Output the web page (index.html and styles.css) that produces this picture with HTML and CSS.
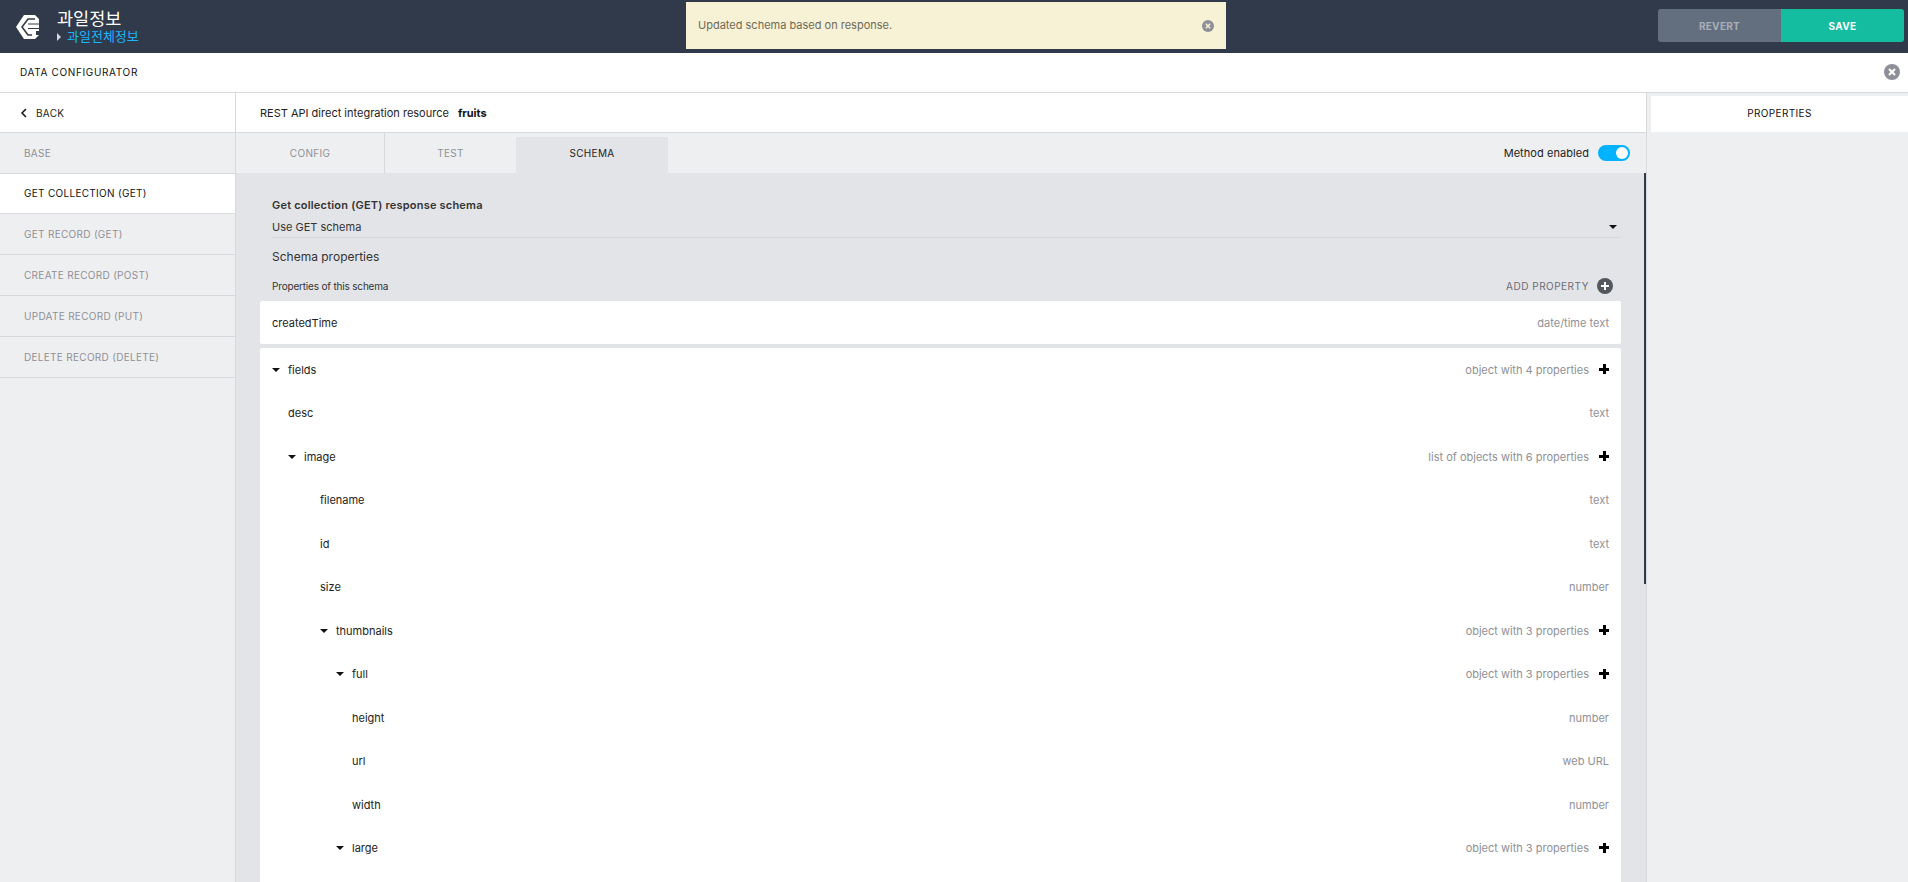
FILE: index.html
```html
<!DOCTYPE html>
<html lang="ko">
<head>
    <meta charset="UTF-8">
    <title>Data Configurator</title>
    <link rel="stylesheet" href="styles.css">
</head>
<body>
    <header class="topbar">
        <div class="brand">
            <svg class="logo" width="24" height="24" viewBox="0 0 24 24">
                <path fill="#fff" d="M8 0H19L23 4V20L19 24H8L0 12Z"/>
                <path fill="none" stroke="#303a4a" stroke-width="1.600" d="M19 4H12L6 12l6 8h4"/>
                <path fill="none" stroke="#303a4a" stroke-width="1" d="M12 9H23M12 13.500H23"/>
                <path fill="#303a4a" d="M20 16h3v4h-3z"/>
            </svg>
            <div class="brand-text">
                <div class="app-name">과일정보</div>
                <div class="page-name"><span class="page-arrow"></span>과일전체정보</div>
            </div>
        </div>
        <div class="toast">
            <span>Updated schema based on response.</span>
            <svg width="12" height="12" viewBox="0 0 12 12">
                <circle cx="6" cy="6" r="6" fill="#8e8f99"/>
                <path d="M3.800 3.800l4.400 4.400M8.200 3.800l-4.400 4.400" stroke="#f7f1d6" stroke-width="1.500"/>
            </svg>
        </div>
        <div class="top-actions">
            <button class="btn-revert">REVERT</button>
            <button class="btn-save">SAVE</button>
        </div>
    </header>

    <div class="toolbar">
        <span>DATA CONFIGURATOR</span>
        <svg width="16" height="16" viewBox="0 0 16 16">
            <circle cx="8" cy="8" r="8" fill="#8e8f99"/>
            <path d="M5 5l6 6M11 5l-6 6" stroke="#fff" stroke-width="2"/>
        </svg>
    </div>

    <div class="workspace">
        <aside class="sidebar">
            <div class="back">
                <svg width="8" height="10" viewBox="0 0 8 10"><path d="M6 1L2 5l4 4" fill="none" stroke="#111" stroke-width="1.500"/></svg>
                BACK
            </div>
            <div class="side-item">BASE</div>
            <div class="side-item active">GET COLLECTION (GET)</div>
            <div class="side-item">GET RECORD (GET)</div>
            <div class="side-item">CREATE RECORD (POST)</div>
            <div class="side-item">UPDATE RECORD (PUT)</div>
            <div class="side-item">DELETE RECORD (DELETE)</div>
        </aside>

        <main class="main">
            <div class="title-row">REST API direct integration resource <b>fruits</b></div>
            <div class="tabs">
                <div class="tab tab-config">CONFIG</div>
                <div class="tab tab-test">TEST</div>
                <div class="tab tab-schema">SCHEMA</div>
                <div class="method">
                    Method enabled
                    <span class="switch"><span class="knob"></span></span>
                </div>
            </div>
            <div class="content">
                <div class="scroll-thumb"></div>
                <div class="form-head">
                    <div class="schema-title">Get collection (GET) response schema</div>
                    <div class="select-row">Use GET schema<span class="caret"></span></div>
                    <div class="props-title">Schema properties</div>
                    <div class="props-bar">
                        <span class="props-label">Properties of this schema</span>
                        <span class="add-prop">
                            ADD PROPERTY
                            <svg width="16" height="16" viewBox="0 0 16 16">
                                <circle cx="8" cy="8" r="8" fill="#54575e"/>
                                <path d="M8 4v8M4 8h8" stroke="#fff" stroke-width="2"/>
                            </svg>
                        </span>
                    </div>
                </div>
                <div class="card single">
                    <div class="row"><span class="name">createdTime</span><span class="type">date/time text</span></div>
                </div>
                <div class="card tree">
                    <div class="row"><span class="name"><i class="caret"></i>fields</span><span class="type">object with 4 properties<i class="plus"></i></span></div>
                    <div class="row lvl1"><span class="name">desc</span><span class="type">text</span></div>
                    <div class="row lvl1"><span class="name"><i class="caret"></i>image</span><span class="type">list of objects with 6 properties<i class="plus"></i></span></div>
                    <div class="row lvl2"><span class="name">filename</span><span class="type">text</span></div>
                    <div class="row lvl2"><span class="name">id</span><span class="type">text</span></div>
                    <div class="row lvl2"><span class="name">size</span><span class="type">number</span></div>
                    <div class="row lvl2"><span class="name"><i class="caret"></i>thumbnails</span><span class="type">object with 3 properties<i class="plus"></i></span></div>
                    <div class="row lvl3"><span class="name"><i class="caret"></i>full</span><span class="type">object with 3 properties<i class="plus"></i></span></div>
                    <div class="row lvl4"><span class="name">height</span><span class="type">number</span></div>
                    <div class="row lvl4"><span class="name">url</span><span class="type">web URL</span></div>
                    <div class="row lvl4"><span class="name">width</span><span class="type">number</span></div>
                    <div class="row lvl3"><span class="name"><i class="caret"></i>large</span><span class="type">object with 3 properties<i class="plus"></i></span></div>
                </div>
            </div>
        </main>

        <aside class="right-panel">
            <div class="right-title">PROPERTIES</div>
        </aside>
    </div>
</body>
</html>
```
FILE: styles.css
```css
* {
    box-sizing: border-box;
}

html, body {
    height: 100%;
}

body {
    margin: 0;
    overflow: hidden;
    display: flex;
    flex-direction: column;
    font-family: Inter, "Noto Sans CJK KR", sans-serif;
    font-size: 11px;
    color: #222;
    background: #eeeff1;
}

.topbar {
    height: 53px;
    flex: none;
    display: flex;
    align-items: flex-start;
    background: #303a4a;
    padding-right: 4px;
}

.brand {
    width: 686px;
    height: 53px;
    flex: none;
    display: flex;
    align-items: center;
    padding-left: 16px;
}

.logo {
    margin-right: 17px;
}

.brand-text {
    padding-bottom: 1px;
    font-family: "Noto Sans CJK KR", sans-serif;
}

.app-name {
    color: #fff;
    font-size: 17.5px;
    line-height: 20px;
}

.page-name {
    color: #19b5fe;
    font-size: 13px;
    line-height: 16px;
}

.page-arrow {
    display: inline-block;
    margin-right: 6px;
    border-left: 4px solid #d5d8dc;
    border-top: 4px solid transparent;
    border-bottom: 4px solid transparent;
}

.toast {
    width: 540px;
    height: 47px;
    margin-top: 2px;
    display: flex;
    justify-content: space-between;
    align-items: center;
    padding: 0 12px;
    background: #f7f1d6;
    color: #6e6b57;
}

.toast span {
    margin-bottom: 2px;
}

.top-actions {
    display: flex;
    margin-top: 9px;
    margin-left: auto;
}

.top-actions button {
    width: 123px;
    height: 33px;
    border: 0;
    font-family: inherit;
    font-size: 10px;
    font-weight: 700;
    letter-spacing: 0.3px;
}

.btn-revert {
    background: #636e7f;
    color: #a9aeb6;
    border-radius: 3px 0 0 3px;
}

.btn-save {
    background: #14bca0;
    color: #fff;
    border-radius: 0 3px 3px 0;
}

.toolbar {
    height: 40px;
    flex: none;
    display: flex;
    justify-content: space-between;
    align-items: center;
    padding: 0 8px 1px 20px;
    background: #fff;
    border-bottom: 1px solid #d8d9dc;
    font-size: 10px;
    letter-spacing: 0.65px;
    color: #111;
}

.workspace {
    flex: 1;
    display: flex;
    min-height: 0;
}

.sidebar {
    width: 236px;
    flex: none;
    border-right: 1px solid #d8d9dc;
}

.back {
    height: 40px;
    display: flex;
    align-items: center;
    gap: 8px;
    padding-left: 20px;
    background: #fff;
    border-bottom: 1px solid #d8d9dc;
    font-size: 10px;
    letter-spacing: 0.3px;
    color: #222;
}

.side-item {
    height: 41px;
    display: flex;
    align-items: center;
    padding: 0 0 1px 24px;
    border-bottom: 1px solid #d8d9dc;
    font-size: 10px;
    letter-spacing: 0.3px;
    color: #8f9096;
}

.side-item.active {
    height: 40px;
    background: #fff;
    color: #111;
}

.main {
    width: 1411px;
    flex: none;
    display: flex;
    flex-direction: column;
    border-right: 1px solid #d8d9dc;
}

.title-row {
    height: 40px;
    flex: none;
    display: flex;
    align-items: center;
    gap: 9px;
    padding-left: 24px;
    background: #fff;
    border-bottom: 1px solid #d8d9dc;
    color: #222;
}

.title-row b {
    color: #111;
}

.tabs {
    height: 40px;
    flex: none;
    display: flex;
    align-items: flex-end;
}

.tab {
    height: 40px;
    display: flex;
    align-items: center;
    justify-content: center;
    font-size: 10px;
    letter-spacing: 0.3px;
    color: #8f9096;
}

.tab-config {
    width: 149px;
    border-right: 1px solid #d8d9dc;
}

.tab-test {
    width: 131px;
}

.tab-schema {
    width: 152px;
    height: 36px;
    padding-bottom: 4px;
    background: #e3e4e8;
    color: #222;
}

.method {
    margin-left: auto;
    height: 40px;
    display: flex;
    align-items: center;
    gap: 9px;
    padding-right: 16px;
    letter-spacing: 0.06px;
    color: #222;
}

.switch {
    width: 32px;
    height: 16px;
    display: flex;
    justify-content: flex-end;
    align-items: center;
    padding-right: 2px;
    border-radius: 8px;
    background: #00b2ff;
}

.knob {
    width: 12px;
    height: 12px;
    border-radius: 50%;
    background: #fff;
}

.content {
    flex: 1;
    position: relative;
    overflow: hidden;
    padding: 0 25px 0 24px;
    background: #e3e4e8;
}

.scroll-thumb {
    position: absolute;
    top: 0;
    right: 0;
    width: 2px;
    height: 411px;
    background: #303a4a;
}

.form-head {
    padding: 25px 0 0 12px;
}

.schema-title {
    font-weight: 600;
    letter-spacing: 0.2px;
    color: #333;
    line-height: 14px;
}

.select-row {
    display: flex;
    justify-content: space-between;
    align-items: center;
    height: 22px;
    padding: 1px 4px 0 0;
    margin-top: 4px;
    border-bottom: 1px solid #d8d9dc;
    color: #333;
}

.props-title {
    font-size: 12px;
    line-height: 16px;
    margin-top: 11px;
    color: #333;
}

.props-bar {
    display: flex;
    justify-content: space-between;
    align-items: center;
    height: 20px;
    margin-top: 11px;
    margin-bottom: 5px;
    padding-right: 8px;
    font-size: 10px;
    color: #333;
}

.props-label {
    letter-spacing: -0.18px;
}

.add-prop {
    display: flex;
    align-items: center;
    gap: 8px;
    letter-spacing: 0.5px;
    color: #6b6d74;
}

.card {
    background: #fff;
    border-radius: 2px;
    margin-bottom: 4px;
}

.single {
    height: 43px;
}

.tree {
    padding-bottom: 40px;
}

.row {
    height: 43.5px;
    display: flex;
    justify-content: space-between;
    align-items: center;
    padding: 0 12px;
    color: #222;
}

.single .row {
    height: 43px;
}

.lvl1 { padding-left: 28px; }
.lvl2 { padding-left: 60px; }
.lvl3 { padding-left: 76px; }
.lvl4 { padding-left: 92px; }

.name {
    display: flex;
    align-items: center;
}

.name .caret {
    margin-right: 8px;
}

.type {
    display: flex;
    align-items: center;
    color: #8f9096;
}

.caret {
    display: inline-block;
    width: 0;
    height: 0;
    border-top: 4px solid #111;
    border-left: 4px solid transparent;
    border-right: 4px solid transparent;
}

.plus {
    width: 10px;
    height: 10px;
    margin-left: 10px;
    margin-top: -1px;
    background:
        linear-gradient(#000, #000) center / 10px 3px no-repeat,
        linear-gradient(#000, #000) center / 3px 10px no-repeat;
}

.right-panel {
    flex: 1;
    padding: 3px 0 0 4px;
}

.right-title {
    height: 36px;
    padding-bottom: 3px;
    display: flex;
    align-items: center;
    justify-content: center;
    background: #fff;
    font-size: 10px;
    letter-spacing: 0.35px;
    color: #111;
}
```
